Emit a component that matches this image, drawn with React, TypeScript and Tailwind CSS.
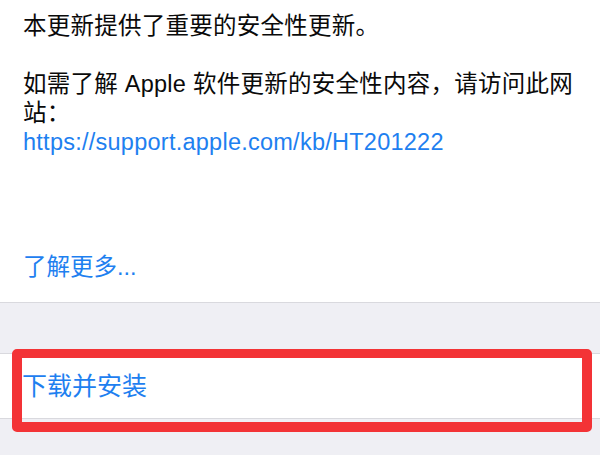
import React from "react";

const font = '"Liberation Sans", "Noto Sans CJK SC", sans-serif';

export default function App() {
  return (
    <div
      className="relative w-[600px] h-[455px] overflow-hidden bg-[#efeff4]"
      style={{ fontFamily: font }}
    >
      <div className="h-[303px] bg-white border-b border-[#d9d9de] flex flex-col px-[23px] pt-[12px]">
        <div className="text-[23.5px] leading-[29px] tracking-[0.25px] text-[#0a0a0a]">
          <p>本更新提供了重要的安全性更新。</p>
          <p className="h-[29px]"></p>
          <p>
            如需了解 Apple 软件更新的安全性内容，请访问此网
            <br />
            站：
          </p>
          <p className="text-[#1e80f0]">https://support.apple.com/kb/HT201222</p>
        </div>
        <div className="mt-[96px] text-[23.5px] leading-[29px] text-[#1e80f0]">了解更多...</div>
      </div>
      <div className="h-[50px]"></div>
      <div className="h-[66px] bg-white border-y border-[#d9d9de] flex items-center px-[22px]">
        <span className="text-[25px] leading-[29px] text-[#1e80f0]">下载并安装</span>
      </div>
      <div className="absolute left-[12px] top-[349px] w-[580px] h-[83px] border-[10px] border-t-[9px] border-[#f33336] rounded-[5px]"></div>
    </div>
  );
}
